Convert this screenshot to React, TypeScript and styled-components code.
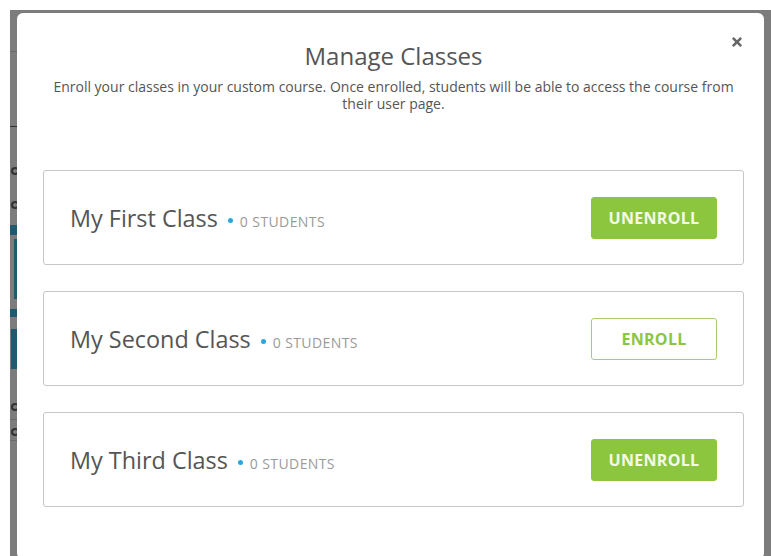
import React from 'react';
import styled, { createGlobalStyle } from 'styled-components';
import { FaTimes } from 'react-icons/fa';

const GlobalStyle = createGlobalStyle`
  html, body {
    margin: 0;
    background: #fff;
  }

  body {
    font-family: "Open Sans", Lato, "Liberation Sans", sans-serif;
  }
`;

const Screen = styled.div`
  box-sizing: border-box;
  width: 771px;
  height: 556px;
  padding: 10px 0 0 10px;
  overflow: hidden;
`;

const Backdrop = styled.div`
  display: flex;
  align-items: flex-start;
  height: 100%;
  padding-top: 3px;
  box-sizing: border-box;
  background: #7c7c7c;
`;

// the sliver of the page that still shows behind the dialog
const PageEdge = styled.div`
  width: 7px;
  flex-shrink: 0;
  display: flex;
  flex-direction: column;
  margin-top: -3px;
`;

const EdgeGap = styled.div<{ $h: number }>`
  height: ${(p) => p.$h}px;
`;

const EdgeRule = styled.div<{ $dark?: boolean }>`
  height: 1px;
  background: ${(p) => (p.$dark ? '#2e2e2e' : '#6a6a6a')};
`;

const EdgeArc = styled.div`
  width: 8px;
  height: 8px;
  margin-left: 1px;
  box-sizing: border-box;
  border: 2px solid #333;
  border-right-color: transparent;
  border-radius: 50%;
`;

const EdgeTeal = styled.div<{ $h: number; $inset?: number }>`
  height: ${(p) => p.$h}px;
  margin-left: ${(p) => p.$inset ?? 0}px;
  background: #1f5a70;
`;

const Modal = styled.div`
  position: relative;
  flex: 1;
  margin-right: 7px;
  padding: 28px 20px 52px 26px;
  background: #fff;
  border-radius: 6px;
`;

const CloseButton = styled.button`
  position: absolute;
  top: 22px;
  right: 20px;
  padding: 0;
  border: none;
  background: none;
  color: #666;
  display: flex;
  cursor: pointer;
`;

const Title = styled.h2`
  margin: 0;
  text-align: center;
  font-size: 24px;
  line-height: 30px;
  font-weight: 400;
  color: #555;
`;

const Intro = styled.p`
  margin: 7px 0 0;
  text-align: center;
  font-size: 14px;
  line-height: 17px;
  color: #555;
`;

const ClassList = styled.div`
  display: flex;
  flex-direction: column;
  gap: 26px;
  margin-top: 58px;
`;

const ClassCard = styled.div`
  box-sizing: border-box;
  height: 95px;
  padding: 0 26px;
  display: flex;
  align-items: center;
  justify-content: space-between;
  border: 1px solid #c6c6c6;
  border-radius: 3px;
`;

const ClassInfo = styled.div`
  display: flex;
  align-items: baseline;
`;

const ClassName = styled.span`
  font-size: 23.4px;
  color: #555;
`;

const Dot = styled.span`
  width: 5px;
  height: 5px;
  margin: 0 7px 0 10px;
  border-radius: 50%;
  background: #2aa6df;
  align-self: center;
  transform: translateY(3px);
`;

const StudentCount = styled.span`
  font-size: 14px;
  letter-spacing: 0.4px;
  text-transform: uppercase;
  color: #9a9a9a;
`;

const EnrollButton = styled.button<{ $enrolled: boolean }>`
  box-sizing: border-box;
  width: 126px;
  height: 42px;
  border-radius: 3px;
  border: 1px solid ${(p) => (p.$enrolled ? '#8cc63f' : '#a3cf6c')};
  background: ${(p) => (p.$enrolled ? '#8cc63f' : '#fff')};
  color: ${(p) => (p.$enrolled ? '#f4faea' : '#8cc63f')};
  font-family: inherit;
  font-size: 16px;
  font-weight: 700;
  letter-spacing: 0.3px;
  cursor: pointer;
`;

const classes = [
  { name: 'My First Class', students: 0, enrolled: true },
  { name: 'My Second Class', students: 0, enrolled: false },
  { name: 'My Third Class', students: 0, enrolled: true },
];

export default function App() {
  return (
    <>
      <GlobalStyle />
      <Screen>
        <Backdrop>
          <PageEdge>
            <EdgeGap $h={41} />
            <EdgeRule />
            <EdgeGap $h={74} />
            <EdgeRule $dark />
            <EdgeGap $h={40} />
            <EdgeArc />
            <EdgeGap $h={26} />
            <EdgeArc />
            <EdgeGap $h={16} />
            <EdgeTeal $h={10} />
            <EdgeGap $h={4} />
            <EdgeTeal $h={60} $inset={4} />
            <EdgeGap $h={10} />
            <EdgeTeal $h={8} />
            <EdgeGap $h={12} />
            <EdgeTeal $h={40} $inset={1} />
            <EdgeGap $h={34} />
            <EdgeArc />
            <EdgeGap $h={8} />
            <EdgeRule />
            <EdgeGap $h={8} />
            <EdgeArc />
            <EdgeGap $h={4} />
            <EdgeRule />
          </PageEdge>
          <Modal>
            <CloseButton aria-label="Close">
              <FaTimes size={14} />
            </CloseButton>
            <Title>Manage Classes</Title>
            <Intro>
              Enroll your classes in your custom course. Once enrolled, students will be able to
              access the course from their user page.
            </Intro>
            <ClassList>
              {classes.map((c) => (
                <ClassCard key={c.name}>
                  <ClassInfo>
                    <ClassName>{c.name}</ClassName>
                    <Dot />
                    <StudentCount>{c.students} students</StudentCount>
                  </ClassInfo>
                  <EnrollButton $enrolled={c.enrolled}>
                    {c.enrolled ? 'UNENROLL' : 'ENROLL'}
                  </EnrollButton>
                </ClassCard>
              ))}
            </ClassList>
          </Modal>
        </Backdrop>
      </Screen>
    </>
  );
}
